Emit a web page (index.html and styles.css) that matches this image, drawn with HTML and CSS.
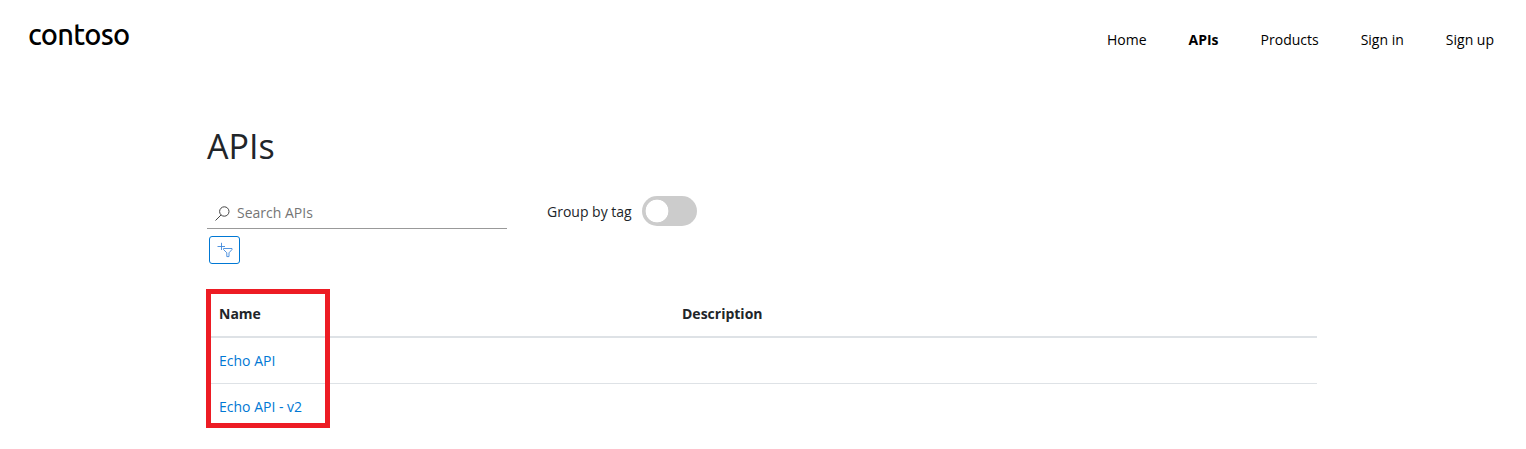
FILE: index.html
```html
<!DOCTYPE html>
<html lang="en">
<head>
<meta charset="utf-8">
<title>APIs</title>
<link rel="stylesheet" href="styles.css">
</head>
<body>
<header class="header">
  <a class="logo">contoso</a>
  <nav class="nav">
    <a>Home</a><a class="active">APIs</a><a>Products</a><a>Sign in</a><a>Sign up</a>
  </nav>
</header>
<main class="main">
  <h1 class="title">APIs</h1>
  <div class="tools">
    <div class="search">
      <svg class="search-icon" viewBox="0 0 15 15"><circle cx="9.3" cy="5.5" r="4.7"/><path d="M6 9L.5 14.5"/></svg>
      <span>Search APIs</span>
    </div>
    <span class="group-label">Group by tag</span>
    <span class="toggle"></span>
  </div>
  <button class="filter" aria-label="Add filter"><svg class="filter-icon" viewBox="0 0 16 16"><path d="M.5 4.5H8M4.5 .8V8"/><path d="M6.5 6.5H15V7.5L12 10.8V14.6H9.8V10.8L6.5 7.5Z"/></svg></button>
  <div class="table-wrap">
    <table class="table">
      <thead><tr><th>Name</th><th>Description</th></tr></thead>
      <tbody>
        <tr><td><a>Echo API</a></td><td></td></tr>
        <tr><td><a>Echo API - v2</a></td><td></td></tr>
      </tbody>
    </table>
    <div class="highlight"></div>
  </div>
</main>
</body>
</html>
```
FILE: styles.css
```css
* { box-sizing: border-box; }
body { margin: 0; background: #fff; color: #212529; font: 14px/21px "Open Sans", sans-serif; overflow: hidden; }
.header { display: flex; justify-content: space-between; height: 79px; padding: 19px 32px 0 28px; color: #000; }
.logo { font: 500 29px/30px Ubuntu, "Open Sans", sans-serif; letter-spacing: -0.7px; }
.nav { display: flex; gap: 42px; padding-top: 10px; }
.active { font-weight: 700; }
.main { width: 1110px; margin-left: 207px; padding-top: 46px; }
.title { margin: 0; font-size: 34px; line-height: 42px; font-weight: 400; }
.tools { display: flex; height: 62px; padding-top: 29px; }
.search { display: flex; align-items: center; gap: 7px; width: 300px; height: 33px; padding-left: 8px; border-bottom: 1px solid #999; color: #757575; }
.search-icon { width: 15px; height: 15px; margin-top: 2px; fill: none; stroke: #444; }
.group-label { margin: 5px 10px 0 40px; }
.toggle { width: 55px; height: 30px; border-radius: 15px; background: radial-gradient(circle at 15px 15px, #fff 11px, #ccc 11.7px); }
.filter { display: flex; align-items: center; justify-content: center; width: 31px; height: 28px; margin: 7px 0 0 2px; padding: 0; border: 1px solid #0078d4; border-radius: 3px; background: #fff; }
.filter-icon { width: 16px; height: 16px; fill: none; stroke: #4089dc; stroke-width: .9; }
.table-wrap { position: relative; margin-top: 27px; }
.table { width: 100%; table-layout: fixed; border-collapse: collapse; }
.table th, .table td { height: 46px; padding: 0 12px; text-align: left; border-bottom: 1px solid #dee2e6; }
.table th { border-bottom-width: 2px; font-weight: 700; }
.table th:first-child { width: 463px; }
.table tr:last-child td { border-bottom: 0; }
.table a { color: #0078d4; }
.highlight { position: absolute; left: -1px; top: -2px; width: 124px; height: 139px; border: 5px solid #ed1c24; }
```
